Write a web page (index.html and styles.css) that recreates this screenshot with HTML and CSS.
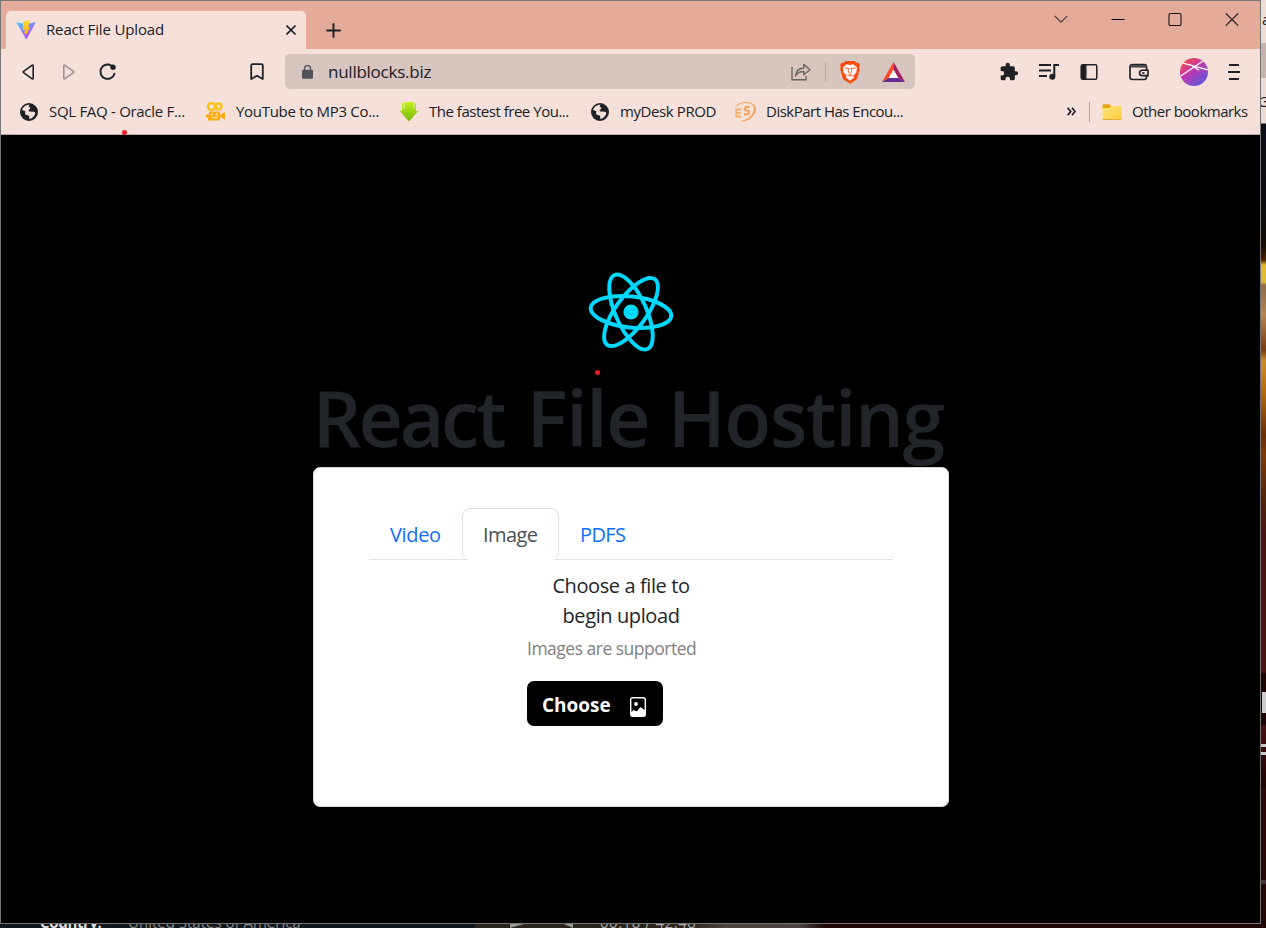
FILE: index.html
```html
<!DOCTYPE html>
<html lang="en">
<head>
<meta charset="utf-8">
<title>React File Upload</title>
<link rel="stylesheet" href="styles.css">
</head>
<body>
<div class="desktop">
  <div class="window">
    <header class="tabstrip">
      <div class="tab">
        <svg class="tab-logo" width="20" height="20" viewBox="0 0 20 20"><defs><linearGradient id="v" x1="0" y1="0" x2=".65" y2="1"><stop offset="0" stop-color="#41d1ff"/><stop offset="1" stop-color="#bd34fe"/></linearGradient><linearGradient id="b" x1="0" y1="0" x2="0" y2="1"><stop offset="0" stop-color="#ffdd35"/><stop offset="1" stop-color="#ffa800"/></linearGradient></defs><path d="M.3 2.2 10 3.9 19.8 2.2 10.3 19.5z" fill="url(#v)"/><path d="m14 .3-6.8 1.3-.6 8.5 2.3-.5-.7 4 1.6-.5-.5 3.4 5.1-9.5-2.3.3z" fill="url(#b)"/></svg>
        <span class="tab-title">React File Upload</span>
        <svg class="tab-close" width="10" height="10" viewBox="0 0 10 10"><path d="m.5.5 9 9m0-9-9 9" stroke="#202124" stroke-width="1.6"/></svg>
      </div>
      <svg class="newtab" width="15" height="15" viewBox="0 0 15 15"><path d="M7.5.3v14.4M.3 7.5h14.4" stroke="#202124" stroke-width="2"/></svg>
      <div class="controls">
        <svg width="14" height="20" viewBox="0 0 14 20"><path d="m.7 6.8 6.3 6.4 6.3-6.4" fill="none" stroke="#443431" stroke-width="1.1"/></svg>
        <svg width="14" height="20" viewBox="0 0 14 20"><path d="M.5 10.5h13" stroke="#000"/></svg>
        <svg width="14" height="20" viewBox="0 0 14 20"><rect x="1" y="4.5" width="12" height="12" rx="1.3" fill="none" stroke="#191412" stroke-width="1.1"/></svg>
        <svg width="14" height="20" viewBox="0 0 14 20"><path d="m.8 4.3 12.4 12.4m0-12.4L.8 16.7" stroke="#191412" stroke-width="1.1"/></svg>
      </div>
    </header>
    <nav class="toolbar">
      <svg class="nav-icon" width="20" height="20" viewBox="0 0 20 20"><path d="M14.2 3.8v12.4c0 .6-.5.9-1 .6L4.6 10.7c-.5-.4-.5-1 0-1.4l8.6-6.1c.5-.3 1 0 1 .6z" fill="none" stroke="#202124" stroke-width="1.6"/></svg>
      <svg class="nav-icon" width="20" height="20" viewBox="0 0 20 20"><path d="M4.8 3.8v12.4c0 .6.5.9 1 .6l8.6-6.1c.5-.4.5-1 0-1.4L5.800 3.200c-.5-.3-1 0-1 .6z" fill="none" stroke="#a1948f" stroke-width="1.6"/></svg>
      <svg class="nav-icon" width="20" height="20" viewBox="0 0 20 20"><path d="M13.300 3.500a7.200 7.200 0 1 0 3.200 8.200" fill="none" stroke="#202124" stroke-width="1.900" stroke-linecap="round"/><circle cx="15" cy="5.200" r="2.700" fill="#202124"/></svg>
      <svg class="save-icon" width="14" height="18" viewBox="0 0 14 18"><path d="M1.200 2.500c0-.8.5-1.300 1.300-1.300h9c.8 0 1.300.5 1.300 1.300V16L7 12.700 1.200 16z" fill="none" stroke="#202124" stroke-width="1.800" stroke-linejoin="round"/></svg>
      <div class="urlbar">
        <svg width="11" height="14" viewBox="0 0 11 14"><rect y="4.800" width="11" height="9" rx="1" fill="#505257"/><path d="M2.500 6V3.600a3 3 0 0 1 6 0V6" fill="none" stroke="#505257" stroke-width="1.400"/></svg>
        <span class="url">nullblocks.biz</span>
        <svg class="share" width="20" height="18" viewBox="0 0 20 18"><path d="M1 4v12.800h14V13" fill="none" stroke="#6c6663" stroke-width="1.400"/><path d="M4.500 13c.3-5 3-7.500 8.300-8V1.400L19 6.700l-6.200 5V8.500C9 8.300 6.500 9.700 4.500 13z" fill="none" stroke="#6c6663" stroke-width="1.400" stroke-linejoin="round"/></svg>
        <i class="url-sep"></i>
        <svg class="brave" width="20" height="24" viewBox="0 0 20 24"><path d="M5.400 1h9.200l1.700 1.800 1.700-.3 1.900 2.200-.6 2 .5 2-2.500 9.300c-.3 1-.8 1.500-1.600 2L10 23.700 4.300 20c-.8-.5-1.300-1-1.600-2L.2 8.700l.5-2-.6-2L2 2.500l1.700.3z" fill="#fb4b0e"/><path d="M6.500 4.300 10 4.900l3.500-.6 3.700 3.800-.8 2.300.2 1.800-3.100 3.300.5 1.900-4 3.300-4-3.300.5-1.900L3.400 12.200l.2-1.800-.8-2.300z" fill="#fff"/><path d="m4.800 8 4 .5-.6 2.200 1 2.800M15.200 8l-4 .5.6 2.200-1 2.800M7.300 15.800l2.700-1.300 2.700 1.300M10 14.500v2" fill="none" stroke="#fb4b0e" stroke-width=".900"/></svg>
        <svg class="bat" width="23" height="20" viewBox="0 0 23 20"><path d="M11.500 0 0 20l7.300-4.200 4.200-7.500z" fill="#ff4724"/><path d="M11.500 0 23 20l-7.300-4.200-4.200-7.500z" fill="#9e1f63"/><path d="M0 20h23l-7.300-4.200H7.300z" fill="#662d91"/><path d="m11.500 7.500-4.900 8.500h9.800z" fill="#fff"/></svg>
      </div>
      <div class="actions">
        <svg width="20" height="20" viewBox="0 0 24 24"><path d="M20.500 11H19V7a2 2 0 0 0-2-2h-4V3.500a2.500 2.500 0 0 0-5 0V5H4a2 2 0 0 0-2 2v3.800h1.500a2.700 2.700 0 0 1 0 5.400H2V20a2 2 0 0 0 2 2h3.800v-1.500a2.700 2.700 0 0 1 5.400 0V22H17a2 2 0 0 0 2-2v-4h1.500a2.500 2.500 0 0 0 0-5z" fill="#202124"/></svg>
        <svg width="20" height="18" viewBox="0 0 20 18"><path d="M0 2h12M0 7.500h12M0 13h8" stroke="#202124" stroke-width="2"/><path d="M15.300 14V2.100H20" fill="none" stroke="#202124" stroke-width="2"/><circle cx="13.300" cy="13.800" r="3" fill="#202124"/></svg>
        <svg width="18" height="18" viewBox="0 0 18 18"><rect x="1.200" y="1.700" width="15.600" height="14.600" rx="1.500" fill="none" stroke="#202124" stroke-width="1.500"/><path d="M1 2h5.500v14H1z" fill="#202124"/></svg>
        <svg width="20" height="18" viewBox="0 0 20 18"><rect x="1" y="1.500" width="16.500" height="15" rx="2.200" fill="none" stroke="#202124" stroke-width="1.700"/><path d="M1.500 2h15.800v2.600H1.500z" fill="#4a4949"/><path d="M19 7.200h-5.800a2.700 2.700 0 0 0 0 5.400H19z" fill="#f5e0da" stroke="#202124" stroke-width="1.600"/><path d="M13 10h2.500" stroke="#202124" stroke-width="1.500"/></svg>
        <svg width="28" height="28" viewBox="0 0 28 28"><defs><linearGradient id="av" x1=".1" y1="0" x2=".9" y2="1"><stop offset="0" stop-color="#fb5533"/><stop offset=".38" stop-color="#cb36a6"/><stop offset="1" stop-color="#4f5de7"/></linearGradient><clipPath id="ac"><circle cx="14" cy="14" r="14"/></clipPath></defs><circle cx="14" cy="14" r="14" fill="url(#av)"/><path clip-path="url(#ac)" d="M0 18.500 23 3M3 5.200l25 6.600M10.500 6.800l8.500 5.500" stroke="#fff" stroke-width="1.300"/></svg>
        <svg width="12" height="18" viewBox="0 0 12 18"><path d="M1 2h10M0 9h12M1 16h10" stroke="#202124" stroke-width="1.800"/></svg>
      </div>
    </nav>
    <nav class="bookmarks">
      <a class="bm bm-sql"><svg width="20" height="20" viewBox="0 0 20 20"><circle cx="10" cy="10" r="9" fill="#202124"/><path d="M10.500 2.800c-1 1-1.200 2 .2 2.500 1.300.4.500 1.700-.4 2.200-1.300.8-.8 2 .5 2l4 .2c1.300 0 1.800 1.500 1 3-1.200 2-3 3.900-5.300 4.200-1-.8.600-2.200-.9-3.300-1.300-.8-3 0-3.400-1.800-.3-1.600 1-2.300-.8-3L3 8C4 5 7 2.700 10.500 2.800z" fill="#f5e0da"/></svg><span>SQL FAQ - Oracle F...</span></a>
      <a class="bm bm-mp3"><svg width="20" height="20" viewBox="0 0 20 20"><circle cx="5.500" cy="4.500" r="3.500" fill="none" stroke="#fcc21c" stroke-width="2.500"/><circle cx="12.500" cy="4.300" r="3" fill="none" stroke="#fcc21c" stroke-width="2.500"/><path d="M3 9.500h11v3l5-2.500v7.500l-5-2.300v3.300H2v-3H0v-3h3z" fill="#fdac17"/><circle cx="6" cy="12.500" r="1" fill="#fff0cb"/><circle cx="10.500" cy="12.500" r="1" fill="#fff0cb"/><path d="M5.500 15.500h6" stroke="#ffe08b" stroke-width="1.300"/></svg><span>YouTube to MP3 Co...</span></a>
      <a class="bm bm-fast"><svg width="20" height="20" viewBox="0 0 20 20"><defs><linearGradient id="ga" x1="0" y1="0" x2="0" y2="1"><stop offset="0" stop-color="#c0f019"/><stop offset="1" stop-color="#79b60d"/></linearGradient></defs><path d="M3 1h1.500v6h1V0h9v7h1V1H17v8l2.700-.5L10 19.500.3 8.500 3 9z" fill="url(#ga)"/></svg><span>The fastest free You...</span></a>
      <a class="bm bm-desk"><svg width="20" height="20" viewBox="0 0 20 20"><circle cx="10" cy="10" r="9" fill="#202124"/><path d="M10.500 2.800c-1 1-1.200 2 .2 2.500 1.300.4.500 1.700-.4 2.200-1.300.8-.8 2 .5 2l4 .2c1.300 0 1.800 1.500 1 3-1.200 2-3 3.900-5.300 4.200-1-.8.600-2.200-.9-3.300-1.300-.8-3 0-3.400-1.800-.3-1.600 1-2.300-.8-3L3 8C4 5 7 2.700 10.500 2.800z" fill="#f5e0da"/></svg><span>myDesk PROD</span></a>
      <a class="bm bm-disk"><svg width="22" height="22" viewBox="0 0 22 22"><path d="M1 6C5 1 16-1 19.500 5c2.500 6-4 14-12 15 5 1.500 15-5 14-13.500C20 0 7 0 1 6z" fill="#f5a25b" stroke="#f5a25b" stroke-width=".6"/><path d="M7.500 8.500H2.300v7h5.200M2.300 12h4.500" fill="none" stroke="#f6ad70" stroke-width="2"/><path d="M15.500 6h-3c-2.300 0-2.300 3.500 0 3.500h.8c2.300 0 2.300 3.700 0 3.700H10" fill="none" stroke="#f6a15a" stroke-width="2"/></svg><span>DiskPart Has Encou...</span></a>
      <svg class="more" width="9" height="9" viewBox="0 0 9 9"><path d="m.7.700 3 3.800-3 3.800M5 .700l3 3.800-3 3.800" fill="none" stroke="#202124" stroke-width="1.700"/></svg>
      <i class="bm-sep"></i>
      <a class="bm bm-other"><svg width="20" height="20" viewBox="0 0 20 20"><defs><linearGradient id="fo" x1="0" y1="0" x2="1" y2="1"><stop offset="0" stop-color="#ffe47e"/><stop offset="1" stop-color="#ffcb40"/></linearGradient></defs><path d="M.500 3.500C.500 2.700 1 2.200 1.800 2.200h5.500L9.500 4v4h-9z" fill="#e9a515"/><path d="M.500 6h6.800l2-2h8.900c.8 0 1.300.5 1.300 1.300v11.200c0 .8-.5 1.300-1.300 1.300H1.800c-.8 0-1.300-.5-1.300-1.300z" fill="url(#fo)"/><path d="M.800 17.500h18.500" stroke="#e0ad3b"/></svg><span>Other bookmarks</span></a>
    </nav>
    <main class="page">
      <svg class="react" width="86" height="82" viewBox="-43 -41 86 82"><circle r="7.600" fill="#00d8ff"/><g fill="none" stroke="#00d8ff" stroke-width="4" transform="rotate(6)"><ellipse rx="40.500" ry="15.500"/><ellipse rx="40.500" ry="15.500" transform="rotate(60)"/><ellipse rx="40.500" ry="15.500" transform="rotate(120)"/></g></svg>
      <h1><span class="word-react">React</span> File Hosting</h1>
      <section class="card">
        <div class="nav-tabs">
          <a class="nav-link link-video">Video</a><a class="nav-link link-image">Image</a><a class="nav-link link-pdf">PDFS</a>
        </div>
        <div class="upload">
          <p class="lead">Choose a file to<br>begin upload</p>
          <p class="hint">Images are supported</p>
          <button class="choose"><span>Choose</span><svg width="16" height="20" viewBox="0 0 16 20"><rect x=".7" y=".7" width="14.600" height="18.600" rx="2" fill="none" stroke="#fff" stroke-width="1.400"/><circle cx="6" cy="7" r="1.900" fill="#fff"/><path d="M1 15l3-2 2.500 1.500L10.500 10l4.500 3.500V18l-1 1.300H2L1 18z" fill="#fff"/></svg></button>
        </div>
      </section>
    </main>
    <i class="dot dot-bookmark"></i>
    <i class="dot dot-page"></i>
  </div>
  <aside class="behind-right"><span class="peek peek-a">a</span><span class="peek peek-g">G</span><i class="block block-a"></i><i class="block block-b"></i><i class="block block-c"></i></aside>
  <footer class="behind-bottom">
    <span class="foot foot-label">Country:</span><span class="foot foot-value">United States of America</span><i class="play"></i><i class="volume"></i><span class="foot foot-time">00:18 / 42:48</span>
  </footer>
</div>
</body>
</html>
```
FILE: styles.css
```css
* { box-sizing: border-box; }
body { margin: 0; background: #000; font-family: "Open Sans", "Noto Sans", sans-serif; color: #202124; overflow: hidden; }
svg { display: block; flex: none; }
.desktop { width: 1266px; height: 928px; display: grid; grid-template: 924px 4px / 1261px 5px; }
.window { position: relative; border: 1px solid #757575; background: #000; display: flex; flex-direction: column; min-width: 0; }

.tabstrip { height: 48px; flex: none; background: #e4ab9a; display: flex; }
.tab { width: 300px; height: 38px; margin: 10px 0 0 5px; background: #f5e0da; border-radius: 5px 5px 0 0; display: flex; align-items: center; padding: 0 10px; }
.tab-title { margin-left: 10px; width: 200px; font-size: 15px; letter-spacing: -.15px; padding-bottom: 2px; white-space: nowrap; }
.tab-close { margin-left: auto; }
.newtab { margin: 22px 0 0 20px; }
.controls { margin: 8px 21px 0 auto; display: flex; gap: 43px; }

.toolbar { height: 46px; flex: none; background: #f5e0da; display: flex; align-items: center; padding: 0 0 1px 18.4px; }
.nav-icon { margin-right: 20px; }
.nav-icon:nth-child(2) { margin-right: 19px; }
.save-icon { margin-left: 111.6px; }
.urlbar { margin-left: 21px; width: 630px; height: 35px; border-radius: 5px; background: #d7c5bf; display: flex; align-items: center; padding: 0 10px 0 17px; }
.url { margin-left: 15px; width: 440px; font-size: 17px; letter-spacing: -.25px; padding-bottom: 1px; white-space: nowrap; }
.share { margin-left: auto; }
.url-sep { width: 1px; height: 20px; margin-left: 14px; background: #b9adaa; }
.brave { margin-left: 14px; }
.bat { margin-left: 22px; }
.actions { margin-left: auto; padding-right: 20px; display: flex; align-items: center; }
.actions svg:nth-child(2) { margin-left: 20px; }
.actions svg:nth-child(3) { margin-left: 21px; }
.actions svg:nth-child(4) { margin-left: 31px; }
.actions svg:nth-child(5) { margin-left: 31px; }
.actions svg:nth-child(6) { margin-left: 20px; }

.bookmarks { height: 40px; flex: none; background: #f5e0da; border-bottom: 1px solid #b9aaa5; display: flex; align-items: center; padding: 0 0 6px 18px; }
.bm { display: flex; align-items: center; height: 24px; flex: none; font-size: 15px; white-space: nowrap; }
.bm span { margin-left: 10px; padding-bottom: 2px; letter-spacing: -.3px; }
.bm-sql { width: 187px; }
.bm-mp3 { width: 193px; }
.bm-fast { width: 191px; }
.bm-fast span { letter-spacing: -.48px; }
.bm-desk { width: 144px; }
.bm-desk span { letter-spacing: -.4px; }
.bm-disk { width: 181px; }
.bm-disk span { letter-spacing: -.5px; }
.more { margin-left: 152px; }
.bm-sep { width: 1px; height: 20px; margin: 0 12px 0 13px; background: #b2a29e; }
.bm-other span { letter-spacing: -.5px; }

.page { flex: 1; display: flex; flex-direction: column; align-items: center; padding-top: 136px; min-height: 0; }
.react { flex: none; }
h1 { margin: 12px 0 0; height: 102px; width: 636px; line-height: 105px; font-size: 77px; font-weight: 550; color: #212529; white-space: nowrap; letter-spacing: -1.4px; }
.word-react { letter-spacing: -3.2px; margin-right: 4.5px; }
.card { width: 636px; height: 340px; flex: none; margin-left: 1px; padding: 40px 55px; border: 1px solid #d8d9da; border-radius: 7px; background: #fff; display: flex; flex-direction: column; }
.nav-tabs { height: 52px; display: flex; border-bottom: 1px solid #dee2e6; flex: none; }
.nav-link { font-size: 20px; line-height: 52px; height: 52px; color: #0d6efd; border: 1px solid transparent; padding-left: 20px; letter-spacing: -.6px; white-space: nowrap; }
.link-video { width: 93px; letter-spacing: -.35px; }
.link-image { width: 97px; color: #495057; background: #fff; border-color: #dee2e6 #dee2e6 #fff; border-radius: 8px; }
.upload { width: 188px; margin: 11px 0 0 158px; }
.lead { margin: 0; font-size: 20px; line-height: 30px; letter-spacing: -.4px; text-align: center; color: #212529; white-space: nowrap; }
.hint { margin: 4px 0 0; font-size: 17.5px; line-height: 27px; letter-spacing: -.5px; color: #808080; white-space: nowrap; }
.choose { margin: 19px 0 0; width: 136px; height: 45px; border: 0; border-radius: 7px; background: #000; color: #fff; font: 700 19px "Open Sans", sans-serif; display: flex; align-items: center; padding: 2px 17px 0 15px; justify-content: space-between; }
.choose svg { margin-top: 4px; }

.dot { position: absolute; width: 5px; height: 5px; border-radius: 50%; background: #ec1c24; }
.dot-bookmark { left: 121px; top: 129px; }
.dot-page { left: 594px; top: 369px; }

.behind-right { position: relative; overflow: hidden; background: linear-gradient(#efdcd6 0 43px, #c6b4b0 43px 78px, #eedad4 78px 123px, #0b0e14 124px, #0b0c11 200px, #130b05 245px, #4b2500 260px, #e0b728 265px, #dfbd38 282px, #8c6b4b 285px, #b58350 315px, #773a11 350px, #cb8b2d 361px, #b76c0f 390px, #692c07 435px, #803908 455px, #4d240c 500px, #481112 540px, #481112 672px, #1c0404 674px, #1c0404 724px, #481112 726px, #1d0305 786px, #2b080a 790px, #210607 928px); }
.peek { position: absolute; left: 0; font-size: 15px; line-height: 20px; }
.peek-a { top: 9px; left: 1px; }
.peek-g { top: 91px; left: -3px; }
.block { position: absolute; }
.block-a { top: 692px; left: 1px; width: 4px; height: 21px; background: #ccc; }
.block-b { top: 744px; left: 0; width: 5px; height: 11px; border-top: 3px solid #ccc; border-bottom: 3px solid #ccc; }
.block-c { top: 880px; left: 0; width: 5px; height: 4px; background: #423032; }
.behind-bottom { grid-column: 1 / 3; position: relative; overflow: hidden; background: linear-gradient(90deg, #10171d 0 475px, #292419 475px 640px, #30251f 690px, #51443f 730px, #484341 800px, #210607 825px); }
.foot { position: absolute; top: -12px; font-size: 15px; line-height: 20px; white-space: nowrap; }
.foot-label { left: 40px; color: #ddd; font-weight: 700; letter-spacing: -.4px; }
.foot-value { left: 128px; color: #888; }
.foot-time { left: 600px; color: #aaa; letter-spacing: .5px; }
.play { position: absolute; left: 510px; top: 0; border-left: 14px solid #999; border-bottom: 4px solid transparent; }
.volume { position: absolute; left: 564px; top: 0; border-right: 9px solid #999; border-bottom: 4px solid transparent; }
```
